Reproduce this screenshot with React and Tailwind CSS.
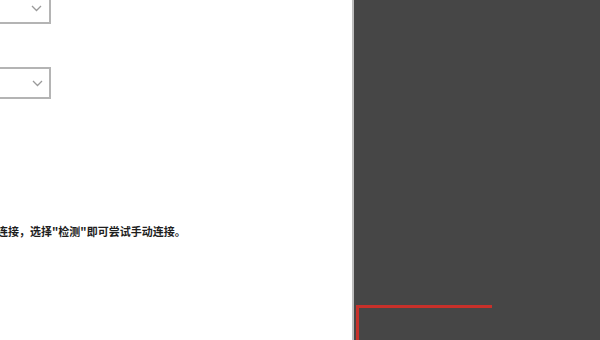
export default function App() {
  const Chevron = () => (
    <svg width="11" height="7" viewBox="0 0 11 7" fill="none">
      <path d="M1 1l4.5 4.5L10 1" stroke="#9a9a9a" strokeWidth="1.3" />
    </svg>
  );
  return (
    <div className="w-[600px] h-[340px] flex overflow-hidden bg-white" style={{ fontFamily: '"Noto Sans CJK SC", "Noto Sans", sans-serif' }}>
      <div className="w-[352px] h-full overflow-hidden flex flex-col">
        <div className="ml-[-150px] mt-[-8px] w-[201px] h-[32px] border-2 border-[#b4b4b4] flex items-center justify-end pr-[7px] shrink-0">
          <Chevron />
        </div>
        <div className="ml-[-150px] mt-[43px] w-[201px] h-[32px] border-2 border-[#b4b4b4] flex items-center justify-end pr-[6px] shrink-0">
          <Chevron />
        </div>
        <div className="ml-[-47px] mt-[125px] text-[11px] leading-[14px] font-bold text-[#1e1e1e] whitespace-nowrap">
          无法自动连接，选择"检测"即可尝试手动连接。
        </div>
      </div>
      <div className="w-[2px] h-full bg-[#bdbdbd]" />
      <div className="flex-1 h-full bg-[#464646] flex flex-col pt-[305px] pl-[2px]">
        <div className="w-[136px] flex-1 border-t-[3px] border-l-[3px] border-[#c8302a]" />
      </div>
    </div>
  );
}
